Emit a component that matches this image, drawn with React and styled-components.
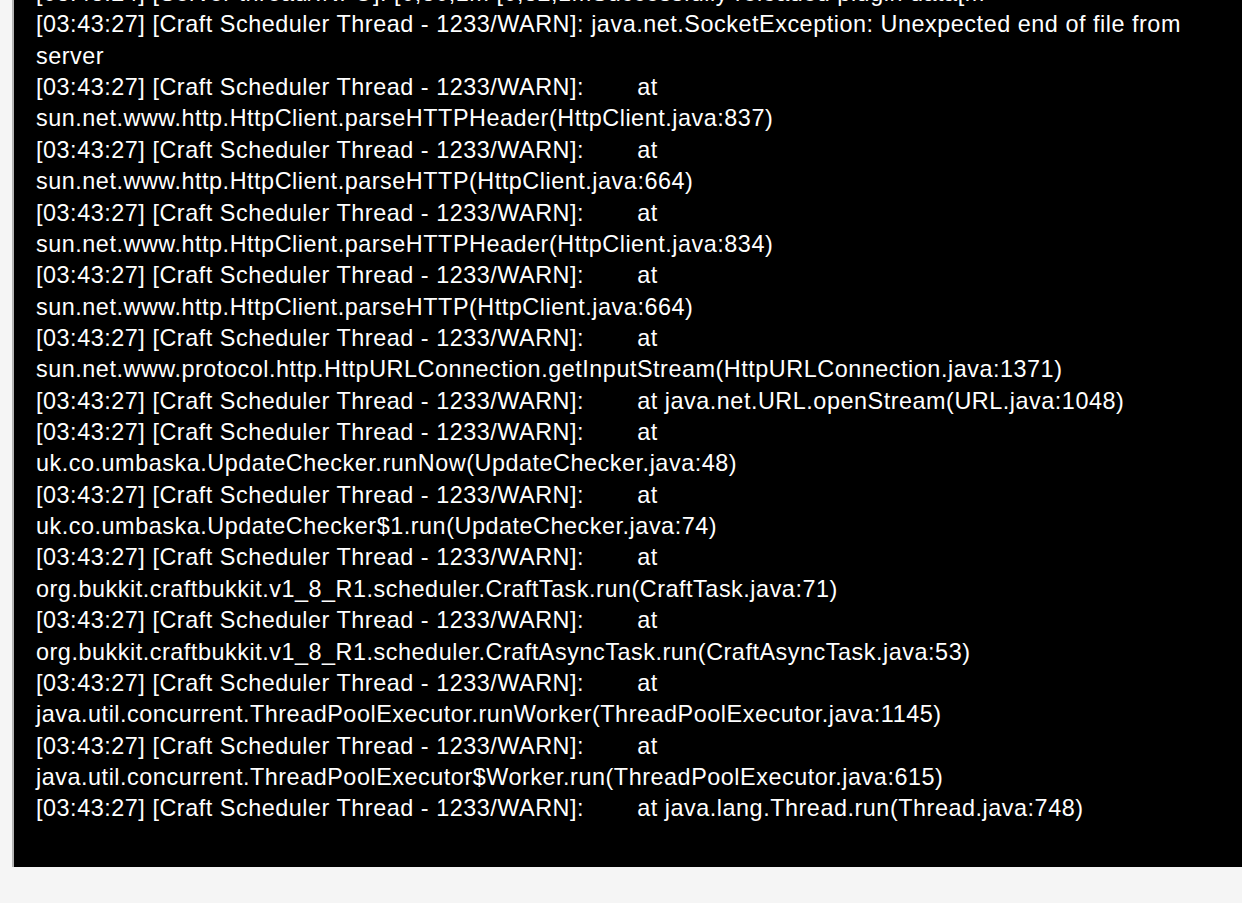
import React from 'react';
import styled, { createGlobalStyle } from 'styled-components';

const GlobalStyle = createGlobalStyle`
  html, body {
    margin: 0;
    padding: 0;
    background: #f5f5f5;
    overflow: hidden;
  }
`;

const Page = styled.div`
  padding-left: 12px;
  margin-right: -12px;
  height: 903px;
`;

const Console = styled.div`
  margin-top: -36px;
  background: #000;
  color: #fff;
  border-left: 2px solid #b4b4b4;
  border-bottom: 2px solid #b4b4b4;
  box-shadow: 0 2px 0 #fff;
  padding: 14px 22px 45px 22px;
  font-family: 'Liberation Sans', Arial, Helvetica, sans-serif;
  font-size: 23.4px;
  letter-spacing: 0.53px;
  line-height: 31.36px;
`;

const Line = styled.div`
  word-wrap: break-word;
`;

const Tab = styled.span`
  display: inline-block;
  width: ${p => p.$w || 46}px;
`;

const PREFIX = '[03:43:27] [Craft Scheduler Thread - 1233/WARN]:';

const trace = [
  'sun.net.www.http.HttpClient.parseHTTPHeader(HttpClient.java:837)',
  'sun.net.www.http.HttpClient.parseHTTP(HttpClient.java:664)',
  'sun.net.www.http.HttpClient.parseHTTPHeader(HttpClient.java:834)',
  'sun.net.www.http.HttpClient.parseHTTP(HttpClient.java:664)',
  'sun.net.www.protocol.http.HttpURLConnection.getInputStream(HttpURLConnection.java:1371)',
  'java.net.URL.openStream(URL.java:1048)',
  'uk.co.umbaska.UpdateChecker.runNow(UpdateChecker.java:48)',
  'uk.co.umbaska.UpdateChecker$1.run(UpdateChecker.java:74)',
  'org.bukkit.craftbukkit.v1_8_R1.scheduler.CraftTask.run(CraftTask.java:71)',
  'org.bukkit.craftbukkit.v1_8_R1.scheduler.CraftAsyncTask.run(CraftAsyncTask.java:53)',
  'java.util.concurrent.ThreadPoolExecutor.runWorker(ThreadPoolExecutor.java:1145)',
  'java.util.concurrent.ThreadPoolExecutor$Worker.run(ThreadPoolExecutor.java:615)',
  'java.lang.Thread.run(Thread.java:748)',
];

function App() {
  return (
    <>
      <GlobalStyle />
      <Page>
        <Console>
          <Line>
            [03:43:24] [Server thread/INFO]: [0;30;1m [0;32;1mSuccessfully reloaded plugin data[m
          </Line>
          <Line>
            {PREFIX} java.net.SocketException: Unexpected end of file from server
          </Line>
          {trace.map((t, i) => (
            <Line key={i}>
              {PREFIX} <Tab />at {t}
            </Line>
          ))}
        </Console>
      </Page>
    </>
  );
}

export default App;
